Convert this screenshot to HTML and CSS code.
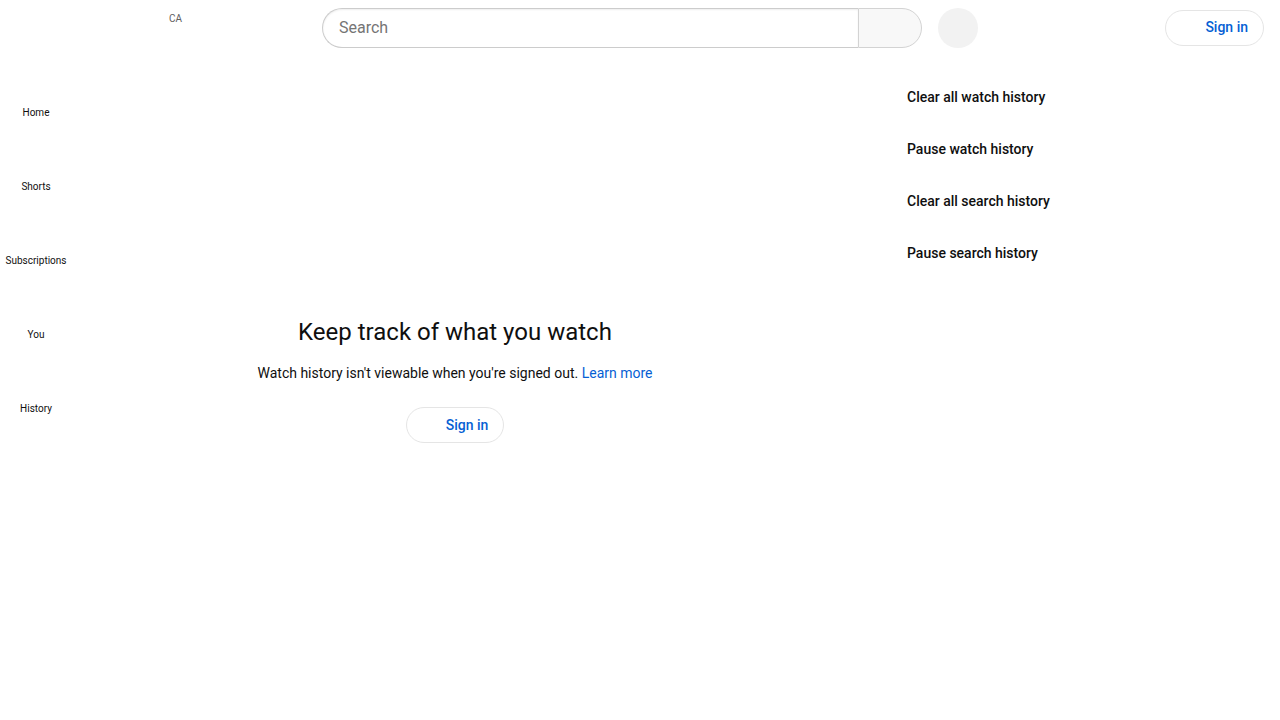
FILE: index.html
```html
<!DOCTYPE html>
<html lang="en">
<head>
<meta charset="utf-8">
<title>History - YouTube</title>
<link rel="stylesheet" href="styles.css">
</head>
<body>
<header class="masthead">
  <div class="start">
    <div class="logo-space"></div>
    <span class="country">CA</span>
  </div>
  <div class="center">
    <div class="search-box"><span class="placeholder">Search</span></div>
    <div class="search-btn"></div>
    <div class="mic-btn"></div>
  </div>
  <div class="end">
    <div class="signin-btn head-btn"><span class="icon-space"></span><span class="signin-text">Sign in</span></div>
  </div>
</header>
<div class="page">
  <nav class="mini-guide">
    <div class="guide-item"><span class="guide-icon"></span><span class="guide-label">Home</span></div>
    <div class="guide-item"><span class="guide-icon"></span><span class="guide-label">Shorts</span></div>
    <div class="guide-item"><span class="guide-icon"></span><span class="guide-label">Subscriptions</span></div>
    <div class="guide-item"><span class="guide-icon"></span><span class="guide-label">You</span></div>
    <div class="guide-item"><span class="guide-icon"></span><span class="guide-label">History</span></div>
  </nav>
  <main class="primary">
    <h1 class="promo-title">Keep track of what you watch</h1>
    <p class="promo-body">Watch history isn't viewable when you're signed out. <a class="link" href="#">Learn more</a></p>
    <div class="signin-btn"><span class="icon-space"></span><span class="signin-text">Sign in</span></div>
  </main>
  <aside class="secondary">
    <div class="action">Clear all watch history</div>
    <div class="action">Pause watch history</div>
    <div class="action">Clear all search history</div>
    <div class="action">Pause search history</div>
  </aside>
</div>
</body>
</html>
```
FILE: styles.css
```css
* { box-sizing: border-box; }
html, body { margin: 0; padding: 0; background: #fff; }
body { font-family: Roboto, "Noto Sans", Arial, sans-serif; color: #0f0f0f; width: 1280px; height: 720px; overflow: hidden; }

.masthead { height: 56px; display: flex; align-items: center; padding: 0 16px; }
.start { width: 306px; height: 56px; display: flex; align-items: flex-start; }
.logo-space { width: 153px; }
.country { font-size: 10px; line-height: 12px; color: #606060; margin-top: 13px; }

.center { display: flex; align-items: center; }
.search-box { width: 536px; height: 40px; border: 1px solid #ccc; border-right: none; border-radius: 40px 0 0 40px; display: flex; align-items: center; padding-left: 16px; padding-bottom: 1px; box-shadow: inset 0 1px 2px #eee; }
.placeholder { font-size: 16px; color: #757575; }
.search-btn { width: 64px; height: 40px; border: 1px solid #d3d3d3; background: #f8f8f8; border-radius: 0 40px 40px 0; }
.mic-btn { width: 40px; height: 40px; border-radius: 50%; background: #f2f2f2; margin-left: 16px; }

.end { margin-left: auto; display: flex; align-items: center; }
.signin-btn { height: 36px; border: 1px solid #e5e5e5; border-radius: 18px; display: inline-flex; align-items: center; padding: 0 15px 1px 9px; }
.head-btn { padding-bottom: 2px; }
.icon-space { width: 24px; height: 24px; margin-right: 6px; }
.signin-text { font-size: 14px; font-weight: 500; color: #065fd4; }

.page { display: flex; }
.mini-guide { width: 72px; padding: 4px 4px 0; display: flex; flex-direction: column; }
.guide-item { display: flex; flex-direction: column; align-items: center; padding: 16px 0 14px; }
.guide-icon { width: 24px; height: 24px; margin-bottom: 6px; }
.guide-label { font-size: 10px; line-height: 14px; color: #0f0f0f; white-space: nowrap; }

.primary { width: 766px; display: flex; flex-direction: column; align-items: center; padding-top: 260px; }
.promo-title { font-size: 24px; line-height: 32px; font-weight: 400; margin: 0 0 15px; }
.promo-body { font-size: 14px; line-height: 20px; margin: 0 0 24px; }
.link { color: #065fd4; text-decoration: none; }

.secondary { padding: 31px 0 0 69px; display: flex; flex-direction: column; }
.action { font-size: 14px; font-weight: 500; line-height: 20px; margin-bottom: 32px; }
```
